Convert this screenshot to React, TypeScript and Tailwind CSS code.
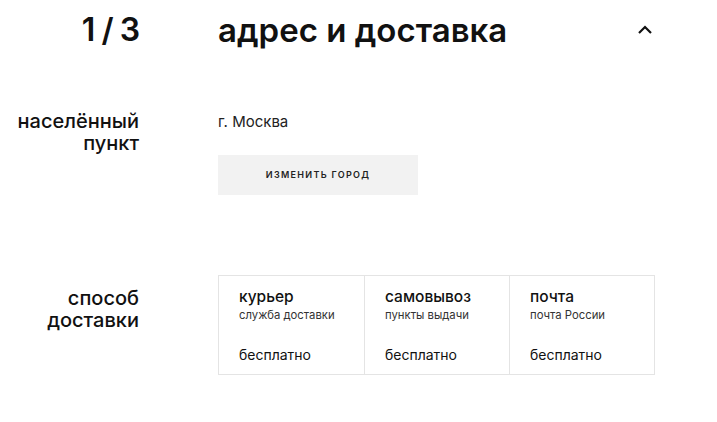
import React from "react";

const methods = [
    { title: "курьер", sub: "служба доставки", price: "бесплатно" },
    { title: "самовывоз", sub: "пункты выдачи", price: "бесплатно" },
    { title: "почта", sub: "почта России", price: "бесплатно" },
];

const App: React.FC = () => {
    return (
        <div className="w-[717px] h-[422px] bg-white text-[#111] font-['Inter',sans-serif] overflow-hidden">

            {/* HEADER */}
            <div className="grid grid-cols-[139px_1fr] gap-x-[79px] items-center pt-[11px]">
                <div className="text-right text-[32px] font-semibold leading-[38px] tracking-[-1px]">1 / 3</div>
                <div className="flex items-center justify-between pr-[64px]">
                    <h1 className="text-[33px] font-semibold leading-[38px]">адрес и доставка</h1>
                    <svg width="16" height="10" viewBox="0 0 16 10" fill="none">
                        <path d="M2 8 L8 2 L14 8" stroke="#111" strokeWidth="2.2" />
                    </svg>
                </div>
            </div>

            {/* CITY */}
            <div className="grid grid-cols-[139px_1fr] gap-x-[79px] mt-[60px]">
                <div className="text-right text-[20px] font-medium leading-[22px] pt-[1px]">
                    населённый<br />пункт
                </div>
                <div className="flex flex-col items-start">
                    <div className="text-[15px] leading-[20px] text-[#222] mt-[3px]">г. Москва</div>
                    <button className="mt-[23px] w-[200px] h-[40px] bg-[#f2f2f2] text-[9px] font-semibold tracking-[1.3px] text-[#222]">
                        ИЗМЕНИТЬ ГОРОД
                    </button>
                </div>
            </div>

            {/* DELIVERY */}
            <div className="grid grid-cols-[139px_1fr] gap-x-[79px] mt-[80px]">
                <div className="text-right text-[20px] font-medium leading-[22px] pt-[12px]">
                    способ<br />доставки
                </div>
                <div className="w-[437px] h-[100px] border border-[#e4e4e4] grid grid-cols-3">
                    {methods.map((m, i) => (
                        <div key={m.title} className={`px-[20px] pt-[11px] flex flex-col ${i > 0 ? "border-l border-[#e4e4e4]" : ""}`}>
                            <div className="text-[15.5px] font-medium leading-[20px]">{m.title}</div>
                            <div className="text-[11.3px] leading-[14px] text-[#333] mt-[1px]">{m.sub}</div>
                            <div className="text-[14px] leading-[18px] mt-[24px]">{m.price}</div>
                        </div>
                    ))}
                </div>
            </div>

        </div>
    );
};

export default App;
